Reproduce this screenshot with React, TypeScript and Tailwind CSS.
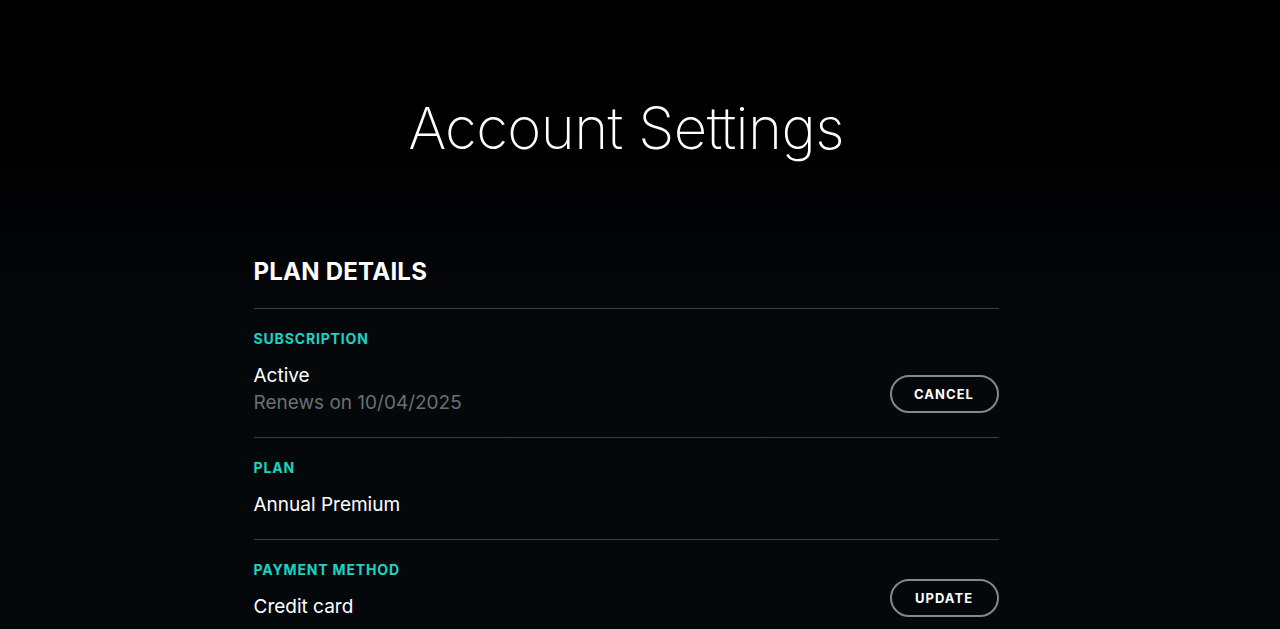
import React from "react";

const font = { fontFamily: "Inter, 'Noto Sans', sans-serif" };

function Label({ children }: { children: React.ReactNode }) {
  return (
    <div className="text-[14px] font-bold tracking-[0.06em] text-[#1cd3c6] leading-none">
      {children}
    </div>
  );
}

function PillButton({ children }: { children: React.ReactNode }) {
  return (
    <button className="mb-[3px] h-[38px] w-[109px] rounded-full border-2 border-[#85888b] text-[13px] font-bold tracking-[0.08em] text-white leading-none">
      {children}
    </button>
  );
}

export default function App() {
  return (
    <div
      className="min-h-[629px] w-full bg-gradient-to-b from-[#000000] via-[#05080b] to-[#05080b] text-white overflow-hidden"
      style={font}
    >
      <div className="pr-[28px]">
        <div className="flex flex-col items-center pt-[92px]">
          <h1 className="text-[58px] font-extralight leading-[72px] tracking-[-0.01em]">
            Account Settings
          </h1>
        </div>
        <div className="mx-auto mt-[96px] w-[745px]">
          <h2 className="text-[24px] font-bold leading-none tracking-[0.01em]">PLAN DETAILS</h2>
          <div className="mt-[24px] border-t border-[#3a3d41]" />

          <div className="flex items-end justify-between pt-[23px] pb-[21px] border-b border-[#3a3d41]">
            <div>
              <Label>SUBSCRIPTION</Label>
              <div className="mt-[16px] text-[19px] leading-[27px]">Active</div>
              <div className="text-[19px] leading-[27px] text-[#6c6f72]">Renews on 10/04/2025</div>
            </div>
            <PillButton>CANCEL</PillButton>
          </div>

          <div className="pt-[23px] pb-[21px] border-b border-[#3a3d41]">
            <Label>PLAN</Label>
            <div className="mt-[16px] text-[19px] leading-[27px]">Annual Premium</div>
          </div>

          <div className="flex items-end justify-between pt-[23px]">
            <div>
              <Label>PAYMENT METHOD</Label>
              <div className="mt-[16px] text-[19px] leading-[27px]">Credit card</div>
            </div>
            <PillButton>UPDATE</PillButton>
          </div>
        </div>
      </div>
    </div>
  );
}
